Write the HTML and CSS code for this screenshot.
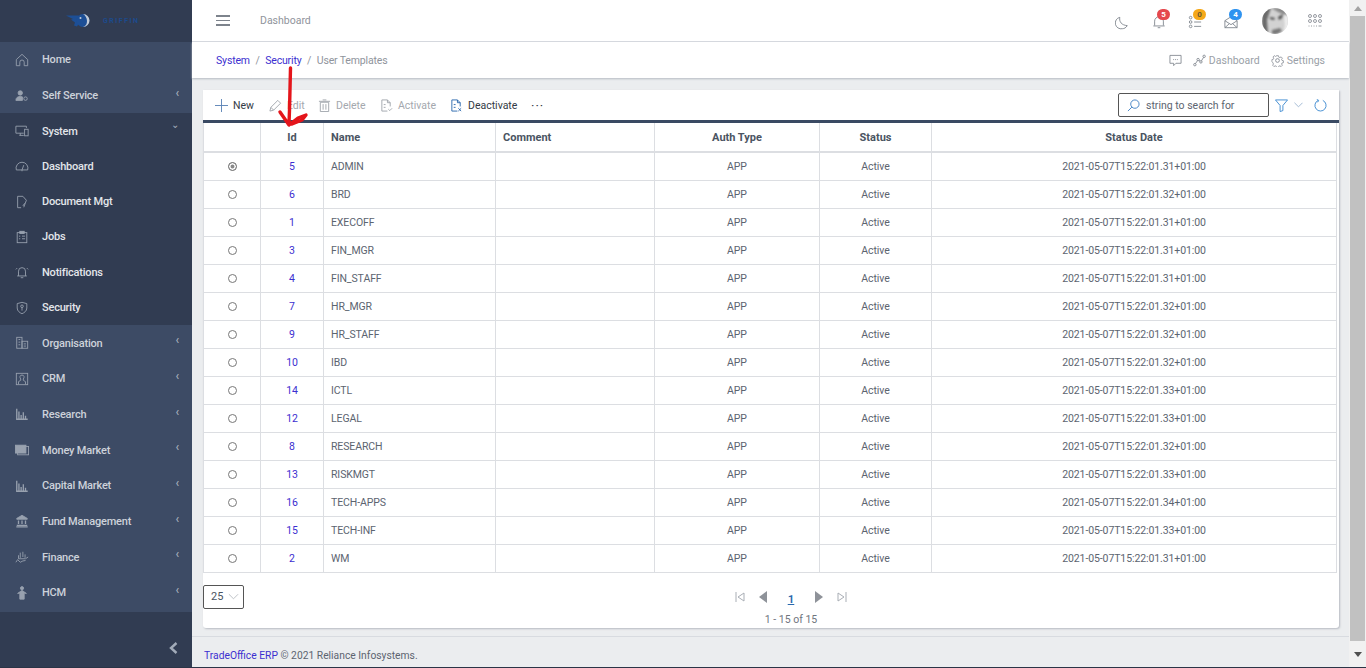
FILE: index.html
```html
<!DOCTYPE html>
<html lang="en">
<head>
  <meta charset="UTF-8" />
  <title>TradeOffice ERP | User Templates</title>
  <link rel="stylesheet" href="styles.css">
</head>
<body>
  <div class="app">
    <!-- Sidebar -->
    <aside class="sidebar">
      <div class="logo">
        <svg width="34" height="14" viewBox="0 0 34 14"><path d="M0 1.500h12l3 1-1 5-3 5-3-1 1-3-4-3 2-.5z" fill="#1d4f96"/><circle cx="17" cy="6.500" r="6.500" fill="#1d4f96"/><path d="M17 0a6.500 6.500 0 0 1 0 13c3-1 4-3 4-6s-2-6-4-7z" fill="#c3cbd6"/><circle cx="14.500" cy="4" r="1" fill="#c3cbd6"/></svg>
        <span class="logo-text">GRIFFIN</span>
      </div>
      <nav class="menu-group group-light">
        <a class="menu-item"><svg class="menu-icon" viewBox="0 0 16 16"><path d="M1.500 7.500 8 1.500l6.500 6v7h-4v-4a2.500 2.500 0 0 0-5 0v4h-4z"/></svg><span>Home</span></a>
        <a class="menu-item"><svg class="menu-icon" viewBox="0 0 16 16"><circle cx="6" cy="4.500" r="2.500" class="fill"/><path d="M1 13c0-3 2-4.500 5-4.500 1 0 2 .2 2.500.5v4z" class="fill"/><circle cx="12" cy="11" r="2"/></svg><span>Self Service</span><i class="caret">‹</i></a>
      </nav>
      <nav class="menu-group group-dark">
        <a class="menu-item"><svg class="menu-icon" viewBox="0 0 16 16"><path d="M10 10.500H1V2.500h12v2M5 13h5M6 10.500V13"/><rect x="11" y="6" width="4" height="7.500"/></svg><span>System</span><i class="caret down">⌄</i></a>
        <a class="menu-item"><svg class="menu-icon" viewBox="0 0 16 16"><path d="M1.500 12.500a6.800 6.800 0 1 1 13 0zM8 12.500 10 7M8 12.500v1.500"/></svg><span>Dashboard</span></a>
        <a class="menu-item"><svg class="menu-icon" viewBox="0 0 16 16"><path d="M7 14.500H3v-13h6l4 4.500-3 8"/><path d="m11 9.500-2 3"/></svg><span>Document Mgt</span></a>
        <a class="menu-item"><svg class="menu-icon" viewBox="0 0 16 16"><rect x="2.500" y="3" width="11" height="11.500"/><rect x="5.500" y="1.500" width="5" height="2.500" class="fill"/><path d="M8 7h3.500M8 10h3.500M4.500 7h1.500M4.500 10h1.500"/></svg><span>Jobs</span></a>
        <a class="menu-item"><svg class="menu-icon" viewBox="0 0 16 16"><path d="M4 12.500V7a4 4 0 0 1 8 0v5.500M2.500 12.500h11M6.500 14.500h3M2.500 3.500 1 5M13.500 3.500 15 5"/></svg><span>Notifications</span></a>
        <a class="menu-item"><svg class="menu-icon" viewBox="0 0 16 16"><path d="M8 1.500 13.500 3v5c0 3.500-3 5.500-5.500 6.500C5.500 13.500 2.500 11.500 2.500 8V3z"/><circle cx="8" cy="6" r="1.500"/><path d="M8 7.500V11"/></svg><span>Security</span></a>
      </nav>
      <nav class="menu-group group-light group-last">
        <a class="menu-item"><svg class="menu-icon" viewBox="0 0 16 16"><rect x="2" y="1.500" width="6" height="12.500"/><rect x="8" y="6" width="6.500" height="8"/><path d="M4 4h2M4 7h2M4 10h2M10 9h2.500M10 11.500h2.500"/></svg><span>Organisation</span><i class="caret">‹</i></a>
        <a class="menu-item"><svg class="menu-icon" viewBox="0 0 16 16"><rect x="1.500" y="1.500" width="13" height="13"/><path d="M4 14v-3l2.500-1.500V8C5 6 5.500 3.500 8 3.500S11 6 9.500 8v1.500L12 11v3"/></svg><span>CRM</span><i class="caret">‹</i></a>
        <a class="menu-item"><svg class="menu-icon" viewBox="0 0 16 16"><path d="M2 2v12h12.500M4.500 13V5M7 13V9M9.500 13V6M12 13v-3" stroke-width="1.500"/></svg><span>Research</span><i class="caret">‹</i></a>
        <a class="menu-item"><svg class="menu-icon" viewBox="0 0 16 16"><rect x=".5" y="2.500" width="12" height="9" class="fill"/><rect x="3" y="4" width="12.500" height="9.500"/><circle cx="9" cy="8.500" r="2"/></svg><span>Money Market</span><i class="caret">‹</i></a>
        <a class="menu-item"><svg class="menu-icon" viewBox="0 0 16 16"><path d="M2 2v12h12.500M4.500 13V5M7 13V9M9.500 13V6M12 13v-3" stroke-width="1.500"/></svg><span>Capital Market</span><i class="caret">‹</i></a>
        <a class="menu-item"><svg class="menu-icon" viewBox="0 0 16 16"><path d="M8 1.500 14 5v1H2V5z" class="fill"/><path d="M4 7.500v4M8 7.500v4M12 7.500v4M2 13h12M1.500 14.800h13" stroke-width="1.500"/></svg><span>Fund Management</span><i class="caret">‹</i></a>
        <a class="menu-item"><svg class="menu-icon" viewBox="0 0 16 16"><path d="M6 3v6M9 2v6M4 6v4M11.500 5v4M4 10h8l3-2M1 14l2-3 3 3 3-1.500 3-.5" /></svg><span>Finance</span><i class="caret">‹</i></a>
        <a class="menu-item"><svg class="menu-icon" viewBox="0 0 16 16"><circle cx="8" cy="2.500" r="1.800" class="fill"/><path d="M3 8.500 8 5l5 3.500-2.500-.5v7h-5V8z" class="fill"/></svg><span>HCM</span><i class="caret">‹</i></a>
      </nav>
      <div class="sidebar-foot"><svg width="9" height="12" viewBox="0 0 9 12"><path d="M7.500 1 2 6l5.500 5" fill="none" stroke="#a2abb9" stroke-width="2.400"/></svg></div>
    </aside>

    <div class="main">
      <!-- Top bar -->
      <header class="topbar">
        <div class="hamburger"><span></span><span></span><span></span></div>
        <div class="page-title">Dashboard</div>
        <div class="top-icons">
          <svg class="top-icon moon" viewBox="0 0 16 16"><path d="M5.500 1.500c-1 5 2 9 8.500 9.500-1.500 2.500-3.500 3.500-5.500 3.500A6.500 6.500 0 0 1 5.500 1.500z"/></svg>
          <div class="badged">
            <svg class="top-icon" viewBox="0 0 16 16"><path d="M3 12V7a5 5 0 0 1 10 0v5M1.500 12.500h13M6.500 14.500h3"/></svg>
            <span class="badge red">5</span>
          </div>
          <div class="badged">
            <svg class="top-icon" viewBox="0 0 16 16"><circle cx="3" cy="3" r="1.500"/><circle cx="3" cy="8" r="1.500"/><circle cx="3" cy="13" r="1.500"/><path d="M7 8h8M7 13h8"/></svg>
            <span class="badge amber">0</span>
          </div>
          <div class="badged">
            <svg class="top-icon" viewBox="0 0 16 16"><path d="M1 6.500 8 2l7 4.500v8H1zM1 6.500l7 4.500 7-4.500M1 14.500l5-4.500M15 14.500l-5-4.500"/></svg>
            <span class="badge blue">4</span>
          </div>
          <svg class="avatar" viewBox="0 0 26 26"><defs><clipPath id="round"><circle cx="13" cy="13" r="13"/></clipPath></defs><g clip-path="url(#round)"><rect width="26" height="26" fill="#d2d2d2"/><g class="avatar-face"><path d="M0 0h9L5 12l1 14H0z" fill="#6a6a6a"/><path d="M9 0h17v8L18 5z" fill="#8a8a8a"/><path d="M22 6l4 2v18h-5l2-8z" fill="#efefef"/><path d="M8 9l5 1-1 2-4-1zM16 9l5-3-1 4-3 2z" fill="#4d4d4d"/><path d="M10 22l8-2 2 3-5 3h-5z" fill="#777"/></g></g></svg>
          <svg class="top-icon apps" viewBox="0 0 14 14"><circle cx="2" cy="2" r="1.500"/><circle cx="7" cy="2" r="1.500"/><circle cx="12" cy="2" r="1.500"/><circle cx="2" cy="7" r="1.500"/><circle cx="7" cy="7" r="1.500"/><circle cx="12" cy="7" r="1.500"/><path d="M.5 12h1M3 12h1M5.500 12h1M8 12h1M10.500 12h3" /></svg>
        </div>
      </header>

      <!-- Breadcrumb -->
      <div class="crumbbar">
        <div class="crumbs"><a>System</a><b>/</b><a>Security</a><b>/</b><span>User Templates</span></div>
        <div class="crumb-links">
          <svg class="crumb-icon" viewBox="0 0 14 14"><path d="M1 1.500h12v8.500H7.500L5 12.500V10H1z"/><path d="M4.500 6h5" stroke-dasharray="1 1"/></svg>
          <a class="crumb-link"><svg class="crumb-icon" viewBox="0 0 14 14"><circle cx="2" cy="11.500" r="1.300"/><circle cx="5.500" cy="6" r="1.300"/><circle cx="8.500" cy="8.500" r="1.300"/><circle cx="12" cy="2.500" r="1.300"/><path d="m2.600 10.400 2.300-3.300M6.500 6.900l1.100.8M9.100 7.400l2.300-3.800"/></svg>Dashboard</a>
          <a class="crumb-link"><svg class="crumb-icon" viewBox="0 0 14 14"><path d="M5.800 1h2.400l.4 1.800 1.300.6 1.600-1 1.600 1.700-1 1.500.5 1.300 1.800.4v2.400l-1.800.4-.5 1.300 1 1.500-1.600 1.700-1.600-1-1.300.5-.4 1.800H5.800l-.4-1.800-1.300-.5-1.600 1-1.600-1.700 1-1.500-.5-1.300L0 8.200V5.800l1.800-.4.5-1.300-1-1.500 1.600-1.700 1.600 1 1.300-.6z" transform="translate(1 1) scale(.86)"/><circle cx="7" cy="7" r="2"/></svg>Settings</a>
        </div>
      </div>

      <!-- Content -->
      <main class="content">
        <section class="card">
          <div class="toolbar">
            <button class="tool t-new"><svg class="tool-icon" viewBox="0 0 14 14"><path d="M7 0v14M0 7h14" stroke="#5b83b5"/></svg>New</button>
            <button class="tool off t-edit"><svg class="tool-icon" viewBox="0 0 14 14"><path d="m1 13 1-4 7.500-7.500 3 3L5 12zM2 9l3 3"/></svg>Edit</button>
            <button class="tool off t-delete"><svg class="tool-icon" viewBox="0 0 14 14"><path d="M2.500 3.500h9v10h-9zM1 2.500h12M5 1h4M5.500 5.500v6M8.500 5.500v6"/></svg>Delete</button>
            <button class="tool off t-activate"><svg class="tool-icon" viewBox="0 0 14 14"><path d="M11 8V4L8 1H2v12h6M8 1v3h3M4 6h2M4 9h2M9 11l1.500 1.500L13 10"/></svg>Activate</button>
            <button class="tool t-deactivate"><svg class="tool-icon" viewBox="0 0 14 14"><path d="M11 8V4L8 1H2v12h6" stroke="#2a68ad"/><path d="M8 1v3h3M4 6h2M4 9h2M9 10l3 3M12 10l-3 3" stroke="#2a68ad"/></svg>Deactivate</button>
            <button class="tool more">···</button>
            <div class="toolbar-right">
              <div class="search"><svg class="search-icon" viewBox="0 0 14 14"><circle cx="8.500" cy="5.500" r="4.500"/><path d="M5.300 8.700 1 13"/></svg>string to search for</div>
              <svg class="blue-icon funnel" viewBox="0 0 14 14"><path d="M.5 1h13L8.500 7v5.500l-3 1V7z"/></svg>
              <svg class="small-chev" viewBox="0 0 10 6"><path d="m.5.5 4.500 4.500L9.500.5"/></svg>
              <svg class="blue-icon refresh" viewBox="0 0 14 14"><path d="M4.500 1.500a6 6 0 1 0 5 0M3 .5l2 1-1 2"/></svg>
            </div>
          </div>

          <table class="grid">
            <thead>
              <tr><th class="c-radio"></th><th class="c-id">Id</th><th class="c-name left">Name</th><th class="c-comment left">Comment</th><th class="c-auth">Auth Type</th><th class="c-status">Status</th><th>Status Date</th></tr>
            </thead>
            <tbody>
              <tr><td><i class="radio on"></i></td><td class="id">5</td><td class="left">ADMIN</td><td></td><td>APP</td><td>Active</td><td>2021-05-07T15:22:01.31+01:00</td></tr>
              <tr><td><i class="radio"></i></td><td class="id">6</td><td class="left">BRD</td><td></td><td>APP</td><td>Active</td><td>2021-05-07T15:22:01.32+01:00</td></tr>
              <tr><td><i class="radio"></i></td><td class="id">1</td><td class="left">EXECOFF</td><td></td><td>APP</td><td>Active</td><td>2021-05-07T15:22:01.31+01:00</td></tr>
              <tr><td><i class="radio"></i></td><td class="id">3</td><td class="left">FIN_MGR</td><td></td><td>APP</td><td>Active</td><td>2021-05-07T15:22:01.31+01:00</td></tr>
              <tr><td><i class="radio"></i></td><td class="id">4</td><td class="left">FIN_STAFF</td><td></td><td>APP</td><td>Active</td><td>2021-05-07T15:22:01.31+01:00</td></tr>
              <tr><td><i class="radio"></i></td><td class="id">7</td><td class="left">HR_MGR</td><td></td><td>APP</td><td>Active</td><td>2021-05-07T15:22:01.32+01:00</td></tr>
              <tr><td><i class="radio"></i></td><td class="id">9</td><td class="left">HR_STAFF</td><td></td><td>APP</td><td>Active</td><td>2021-05-07T15:22:01.32+01:00</td></tr>
              <tr><td><i class="radio"></i></td><td class="id">10</td><td class="left">IBD</td><td></td><td>APP</td><td>Active</td><td>2021-05-07T15:22:01.32+01:00</td></tr>
              <tr><td><i class="radio"></i></td><td class="id">14</td><td class="left">ICTL</td><td></td><td>APP</td><td>Active</td><td>2021-05-07T15:22:01.33+01:00</td></tr>
              <tr><td><i class="radio"></i></td><td class="id">12</td><td class="left">LEGAL</td><td></td><td>APP</td><td>Active</td><td>2021-05-07T15:22:01.33+01:00</td></tr>
              <tr><td><i class="radio"></i></td><td class="id">8</td><td class="left">RESEARCH</td><td></td><td>APP</td><td>Active</td><td>2021-05-07T15:22:01.32+01:00</td></tr>
              <tr><td><i class="radio"></i></td><td class="id">13</td><td class="left">RISKMGT</td><td></td><td>APP</td><td>Active</td><td>2021-05-07T15:22:01.33+01:00</td></tr>
              <tr><td><i class="radio"></i></td><td class="id">16</td><td class="left">TECH-APPS</td><td></td><td>APP</td><td>Active</td><td>2021-05-07T15:22:01.34+01:00</td></tr>
              <tr><td><i class="radio"></i></td><td class="id">15</td><td class="left">TECH-INF</td><td></td><td>APP</td><td>Active</td><td>2021-05-07T15:22:01.33+01:00</td></tr>
              <tr><td><i class="radio"></i></td><td class="id">2</td><td class="left">WM</td><td></td><td>APP</td><td>Active</td><td>2021-05-07T15:22:01.31+01:00</td></tr>
            </tbody>
          </table>

          <div class="pager">
            <div class="page-size">25<svg class="size-chev" viewBox="0 0 12 7"><path d="m1 1 5 5 5-5"/></svg></div>
            <div class="pager-mid">
              <div class="pager-nav">
                <svg class="pg-icon" viewBox="0 0 10 10"><path d="M1 0v10M9 1 3 5l6 4z"/></svg>
                <svg class="pg-solid" viewBox="0 0 8 12"><path d="M8 0v12L0 6z"/></svg>
                <a class="pg-num">1</a>
                <svg class="pg-solid" viewBox="0 0 8 12"><path d="M0 0v12l8-6z"/></svg>
                <svg class="pg-icon" viewBox="0 0 10 10"><path d="M9 0v10M1 1l6 4-6 4z"/></svg>
              </div>
              <div class="pg-count">1 - 15 of 15</div>
            </div>
          </div>
        </section>
      </main>

      <footer class="footer"><a>TradeOffice ERP</a> © 2021 Reliance Infosystems.</footer>
    </div>

    <div class="scrollbar">
      <i class="arrow-up"></i>
      <div class="thumb"></div>
      <i class="arrow-down"></i>
    </div>
  </div>

  <!-- Red hand drawn arrow on top of the screenshot -->
  <svg class="scribble" width="50" height="75" viewBox="0 0 50 75"><path d="M20.500 8 19.500 50 19 64M10 52 19 65 28 58 36 55 32 60 22 64" fill="none" stroke="#e4151b" stroke-width="3.400" stroke-linecap="round" stroke-linejoin="round"/></svg>
</body>
</html>
```

FILE: styles.css
```css
* { box-sizing: border-box; margin: 0; padding: 0; font-family: Roboto, "Open Sans", sans-serif; }
body { width: 1366px; height: 668px; overflow: hidden; position: relative; background: #ebedef; color: #5c6470; font-size: 11px; border-bottom: 1px solid #2b3446; }

.app { display: flex; height: 667px; }

/* sidebar */
.sidebar { width: 192px; flex: none; display: flex; flex-direction: column; background: #313c52; }
.logo { height: 42px; display: flex; align-items: center; padding-left: 66px; gap: 3px; flex: none; }
.logo-text { color: #1d4a8c; font-size: 7px; font-weight: 700; letter-spacing: 1.500px; }
.menu-group { display: flex; flex-direction: column; }
.group-light { background: #3d4b65; }
.group-last { padding-bottom: 1.500px; }
.menu-item { height: 35.700px; display: flex; align-items: center; color: #e3e6ea; font-size: 11px; font-weight: 500; letter-spacing: -.2px; padding-left: 15px; position: relative; }
.group-dark .menu-item { height: 35.300px; }
.group-light .menu-item { color: #cdd2da; }
.menu-icon { width: 14px; height: 14px; margin-right: 13px; fill: none; stroke: #98a1af; stroke-width: 1; flex: none; }
.menu-icon .fill { fill: #98a1af; }
.caret { position: absolute; right: 13px; top: 8px; font-style: normal; font-size: 12px; color: #a6aebb; }
.caret.down { top: 6px; right: 13px; font-size: 10px; }
.sidebar-foot { flex: 1; display: flex; justify-content: flex-end; align-items: flex-end; padding: 0 14px 13px 0; }

/* main column */
.main { flex: 1; min-width: 0; display: flex; flex-direction: column; }
.topbar { height: 42px; flex: none; background: #fff; border-bottom: 1px solid #d8dbe0; display: flex; align-items: center; padding-left: 24px; }
.hamburger { width: 14px; display: flex; flex-direction: column; gap: 3px; margin-right: 30px; }
.hamburger span { height: 1.500px; background: #7d838c; }
.page-title { color: #8f949c; font-size: 10.500px; }
.top-icons { margin-left: auto; display: flex; align-items: center; padding-right: 27px; }
.top-icon { width: 14px; height: 14px; fill: none; stroke: #7d838c; stroke-width: 1; display: block; }
.moon { margin-right: 23px; margin-top: 4px; }
.badged { position: relative; margin-right: 22px; margin-top: 2px; }
.badge { position: absolute; top: -6px; left: 5px; min-width: 13px; height: 11px; border-radius: 6px; color: #fff; font-size: 8px; line-height: 11px; font-weight: 700; text-align: center; }
.red { background: #e5484d; }
.amber { background: #f5a819; color: #6b5a30; }
.blue { background: #2f93f0; }
.avatar { width: 26px; height: 26px; margin: 0 20px 0 2px; }
.avatar-face { filter: blur(1px); }
.apps { width: 14px; height: 14px; stroke-width: .8; }

.crumbbar { height: 36px; flex: none; background: #fff; box-shadow: 0 1px 2px #b5bac2; display: flex; align-items: center; padding: 0 24px; position: relative; }
.crumbs { display: flex; gap: 5.500px; font-size: 10.500px; letter-spacing: -.15px; color: #8f949c; }
.crumbs a { color: #3c2fd0; }
.crumbs b { font-weight: 400; }
.crumb-links { margin-left: auto; display: flex; align-items: center; color: #9a9fa7; font-size: 10.500px; gap: 11px; }
.crumb-link { display: flex; align-items: center; gap: 3px; }
.crumb-icon { width: 13px; height: 13px; fill: none; stroke: #7d838c; stroke-width: .9; }

.content { flex: 1; padding: 12px 10px 9px 11px; min-height: 0; }
.card { background: #fff; height: 538px; border-radius: 0 0 3px 3px; box-shadow: 1px 1px 2px #b8bcc3; display: flex; flex-direction: column; }

.toolbar { height: 33px; flex: none; display: flex; align-items: center; padding-left: 12px; border-bottom: 3px solid #3a4a63; }
.tool { border: 0; background: none; display: flex; align-items: center; gap: 5px; font-size: 10.500px; color: #333a45; font-family: inherit; flex: none; }
.tool.off { color: #a4a8ae; }
.t-new { width: 54px; }
.t-edit { width: 49px; }
.t-delete { width: 62px; }
.t-activate { width: 70px; }
.t-deactivate { width: 81px; }
.tool-icon { width: 13px; height: 13px; fill: none; stroke: #a0a5ac; stroke-width: 1; flex: none; }
.more { letter-spacing: 1px; font-size: 13px; }
.toolbar-right { margin-left: auto; display: flex; align-items: center; padding-right: 12px; }
.search { width: 151px; height: 24px; border: 1px solid #555; border-radius: 2px; display: flex; align-items: center; gap: 6px; padding-left: 8px; font-size: 10.500px; color: #5c6470; }
.search-icon { width: 13px; height: 13px; fill: none; stroke: #3f7fc4; stroke-width: 1; }
.blue-icon { width: 13px; height: 13px; fill: none; stroke: #3f8ad0; stroke-width: 1; }
.funnel { margin-left: 6px; }
.small-chev { width: 9px; height: 6px; fill: none; stroke: #9bb4d0; stroke-width: 1; margin: 0 11px 0 6px; }

.grid { width: 1134px; border-collapse: collapse; table-layout: fixed; color: #5c6470; font-size: 10.500px; letter-spacing: -.1px; }
.grid th { height: 29px; font-size: 11px; letter-spacing: 0; font-weight: 700; color: #4a5462; border: 1px solid #dcdee2; border-bottom-width: 2px; border-top: 0; text-align: center; }
.grid td { height: 28px; border: 1px solid #dcdee2; text-align: center; padding: 0; }
.grid .left { text-align: left; padding-left: 7px; }
.grid .id { color: #3c2fd0; }
.c-radio { width: 57px; }
.c-id { width: 63px; }
.c-name { width: 172px; }
.c-comment { width: 159px; }
.c-auth { width: 165px; }
.c-status { width: 112px; }
.radio { display: block; width: 9px; height: 9px; border: 1px solid #777; border-radius: 50%; margin: 0 auto; }
.radio.on { background: #888; box-shadow: inset 0 0 0 1.500px #fff; }

.pager { flex: 1; display: flex; position: relative; justify-content: center; padding-left: 40px; }
.page-size { position: absolute; left: 0; top: 12px; width: 41px; height: 24px; border: 1px solid #555; border-radius: 2px; display: flex; align-items: center; padding-left: 7px; gap: 5px; font-size: 11px; color: #4a5462; }
.size-chev { width: 11px; height: 7px; fill: none; stroke: #b9bdc3; stroke-width: 1; }
.pager-mid { display: flex; flex-direction: column; align-items: center; padding-top: 18px; }
.pager-nav { display: flex; align-items: center; gap: 14px; height: 12px; }
.pg-icon { width: 10px; height: 10px; fill: none; stroke: #a9aeb5; stroke-width: 1; }
.pg-solid { width: 8px; height: 12px; fill: #8e9299; }
.pg-num { color: #2a68ad; font-size: 11.500px; font-weight: 600; text-decoration: underline; padding: 0 7px; margin-top: 4px; }
.pg-count { margin-top: 10px; font-size: 10.500px; color: #6f757e; }

.footer { height: 31px; flex: none; border-top: 1px solid #d8dbe0; padding: 12px 0 0 12px; font-size: 10.300px; color: #5c6470; }
.footer a { color: #3c2fd0; }

/* scrollbar */
.scrollbar { width: 17px; flex: none; background: #f1f1f1; display: flex; flex-direction: column; align-items: center; }
.arrow-up { margin: 6px 0 5px; border: 4px solid transparent; border-top: 0; border-bottom: 5px solid #a3a3a3; }
.thumb { width: 15px; flex: 1; background: #c1c1c1; }
.arrow-down { margin: 11px 0 10px; border: 4px solid transparent; border-bottom: 0; border-top: 5px solid #505050; }

.scribble { position: absolute; left: 270px; top: 60px; }
```
